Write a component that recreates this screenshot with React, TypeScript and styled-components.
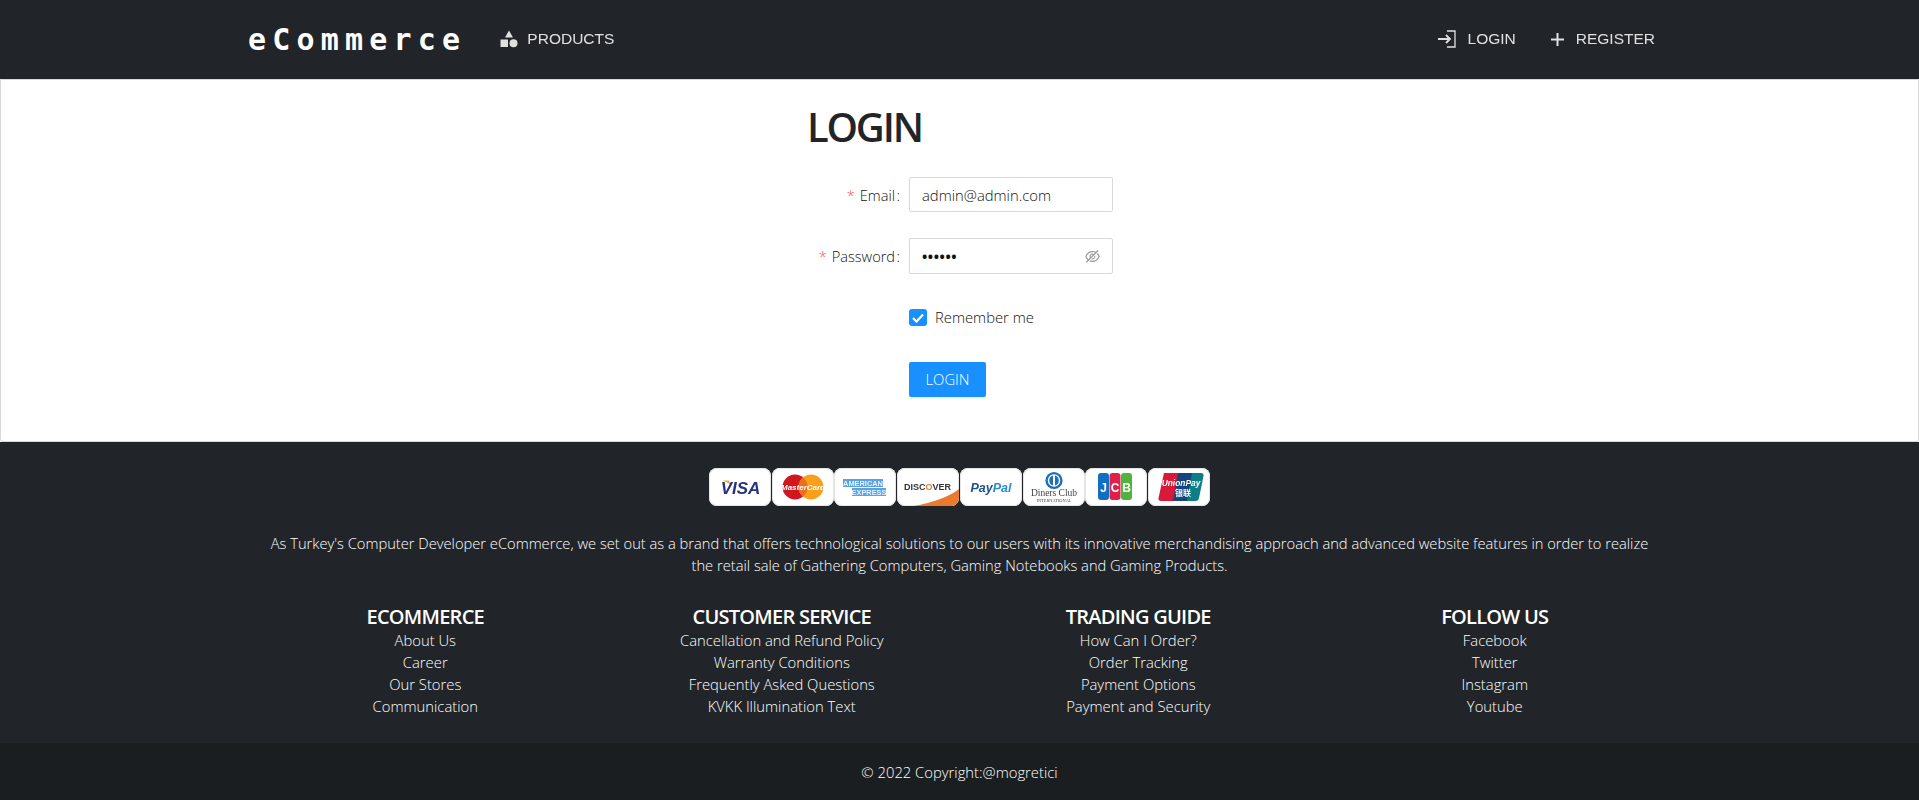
import React from "react";
import styled, { createGlobalStyle } from "styled-components";
import { AiOutlineEyeInvisible } from "react-icons/ai";

const GlobalStyle = createGlobalStyle`
  html, body {
    margin: 0;
    padding: 0;
    background: #ffffff;
    font-family: "Open Sans", "Noto Sans", sans-serif;
  }
  * {
    box-sizing: border-box;
  }
`;

const Navbar = styled.header`
  height: 79px;
  background: #212529;
  color: #ffffff;
  padding: 0 264px 1px 248px;
  display: flex;
  align-items: center;
`;

const Brand = styled.a`
  font-family: "DejaVu Sans Mono", "Liberation Mono", monospace;
  font-weight: 700;
  font-size: 30px;
  letter-spacing: 6.2px;
  margin-right: 34px;
  color: #ffffff;
`;

const NavLink = styled.a<{ $gap?: number }>`
  display: flex;
  align-items: center;
  gap: ${(p) => p.$gap ?? 9}px;
  font-family: "Liberation Sans", Arial, sans-serif;
  font-size: 15.5px;
  font-weight: 400;
  color: #ffffff;
  opacity: 0.86;
`;

const NavRight = styled.div`
  margin-left: auto;
  display: flex;
  gap: 34px;
`;

const Main = styled.main`
  height: 363px;
  border: 1px solid #d8d8d8;
  border-radius: 0 0 3px 3px;
  padding: 22px 0 0 2px;
  display: flex;
  justify-content: center;
`;

const LoginBox = styled.div`
  width: 305px;
`;

const Title = styled.h1`
  margin: 0 0 25px -1px;
  font-size: 40px;
  line-height: 50px;
  font-weight: 600;
  letter-spacing: -2.2px;
  color: #212529;
`;

const FormRow = styled.div<{ $mb: number }>`
  display: grid;
  grid-template-columns: 101px 204px;
  align-items: center;
  margin-bottom: ${(p) => p.$mb}px;
`;

const Label = styled.label`
  display: block;
  text-align: right;
  padding-right: 9px;
  font-size: 14.600px;
  font-weight: 300;
  color: #111111;
  white-space: nowrap;
`;

const Required = styled.span`
  color: #ff4d4f;
  margin-right: 5px;
`;

const InputBox = styled.div<{ $h: number }>`
  grid-column: 2;
  height: ${(p) => p.$h}px;
  border: 1px solid #d9d9d9;
  border-radius: 2px;
  padding: 0 12px;
  display: flex;
  align-items: center;
  justify-content: space-between;
  font-size: 14.800px;
  font-weight: 300;
  color: #111111;
`;

const Dots = styled.span`
  font-size: 14px;
  letter-spacing: 0.6px;
  font-weight: 700;
`;

const EyeIcon = styled(AiOutlineEyeInvisible)`
  width: 17px;
  height: 17px;
  color: #9a9a9a;
  margin-right: -1px;
`;

const CheckRow = styled.div`
  grid-column: 2;
  display: flex;
  align-items: center;
  gap: 8px;
  font-size: 14.800px;
  line-height: 17px;
  font-weight: 300;
  color: #111111;
`;

const CheckBox = styled.span`
  width: 18px;
  height: 17px;
  background: #1890ff;
  border-radius: 3px;
  display: flex;
  align-items: center;
  justify-content: center;
`;

const SubmitButton = styled.button`
  grid-column: 2;
  justify-self: start;
  width: 77px;
  height: 35px;
  padding: 0 0 2px;
  background: #1890ff;
  border: 0;
  border-radius: 2px;
  box-shadow: 0 2px 0 rgba(0, 0, 0, 0.045);
  color: #ffffff;
  font-family: inherit;
  font-size: 14.800px;
  font-weight: 300;
`;

const Footer = styled.footer`
  background: #212529;
  color: #ffffff;
  height: 301px;
  padding-top: 26px;
`;

const Cards = styled.div`
  display: flex;
  justify-content: center;
  gap: 0.75px;
`;

const PayCard = styled.div`
  width: 62px;
  height: 38px;
  background: #ffffff;
  border-radius: 8px;
  overflow: hidden;
  box-shadow: inset 0 0 0 1px #e4e4e4;
  svg {
    display: block;
    filter: blur(0.3px);
  }
`;

const About = styled.p`
  width: 1385px;
  margin: 26px auto 0;
  text-align: center;
  font-size: 14.700px;
  line-height: 22px;
  font-weight: 300;
`;

const Columns = styled.div`
  width: 1426px;
  margin: 28px 0 0 247px;
  display: grid;
  grid-template-columns: repeat(4, 1fr);
  text-align: center;
`;

const ColumnTitle = styled.h5`
  margin: 0;
  font-size: 20px;
  line-height: 25px;
  font-weight: 600;
  letter-spacing: -0.75px;
`;

const ColumnLink = styled.a`
  display: block;
  font-size: 14.800px;
  line-height: 22px;
  font-weight: 300;
`;

const Copyright = styled.div`
  height: 57px;
  background: #1b1e21;
  color: #ffffff;
  display: flex;
  align-items: center;
  justify-content: center;
  font-size: 14.800px;
  font-weight: 300;
`;

const sans = "Liberation Sans, Arial, sans-serif";

const Visa = () => (
  <svg width="62" height="38" viewBox="0 0 62 38">
    <path d="M13 12.500 L20 12.500 L22 18 Q20 14 13 12.500Z" fill="#f2a53a" />
    <text x="31.500" y="25.500" textAnchor="middle" fontFamily={sans} fontWeight="700" fontStyle="italic" fontSize="17" fill="#27337a">VISA</text>
  </svg>
);

const MasterCard = () => (
  <svg width="62" height="38" viewBox="0 0 62 38">
    <circle cx="23" cy="19" r="12.500" fill="#d0161f" />
    <circle cx="39" cy="19" r="12.500" fill="#f8a01c" />
    <path d="M31 9.300a12.500 12.500 0 0 1 0 19.400a12.500 12.500 0 0 1 0-19.400Z" fill="#e8701a" />
    <text x="31" y="22" textAnchor="middle" fontFamily={sans} fontWeight="700" fontStyle="italic" fontSize="8" fill="#ffffff">MasterCard</text>
  </svg>
);

const Amex = () => (
  <svg width="62" height="38" viewBox="0 0 62 38">
    <rect x="9" y="11" width="40" height="8" fill="#5ba3e0" />
    <rect x="18" y="20" width="34" height="8" fill="#5ba3e0" />
    <text x="29" y="18" textAnchor="middle" fontFamily={sans} fontSize="7.400" fontWeight="700" fill="#e6f2ff">AMERICAN</text>
    <text x="35" y="27" textAnchor="middle" fontFamily={sans} fontSize="7.400" fontWeight="700" fill="#e6f2ff">EXPRESS</text>
  </svg>
);

const Discover = () => (
  <svg width="62" height="38" viewBox="0 0 62 38">
    <path d="M17 38 Q48 32 62 21 V38Z" fill="#e87b2e" />
    <text x="30.500" y="21.500" textAnchor="middle" fontFamily={sans} fontSize="9" fontWeight="700" fill="#333333">
      DISC<tspan fill="#e87b2e">O</tspan>VER
    </text>
  </svg>
);

const PayPal = () => (
  <svg width="62" height="38" viewBox="0 0 62 38">
    <text x="31" y="23.500" textAnchor="middle" fontFamily={sans} fontSize="12.500" fontWeight="700" fontStyle="italic">
      <tspan fill="#1f4f8f">Pay</tspan>
      <tspan fill="#2a8fd0">Pal</tspan>
    </text>
  </svg>
);

const Diners = () => (
  <svg width="62" height="38" viewBox="0 0 62 38">
    <circle cx="31" cy="12.500" r="8.600" fill="#1c6fb8" />
    <circle cx="31" cy="12.500" r="6.200" fill="#ffffff" />
    <path d="M30 7.500v10a5.200 5.200 0 0 1 0-10Zm2 0a5.200 5.200 0 0 1 0 10Z" fill="#1c6fb8" />
    <text x="31" y="28" textAnchor="middle" fontFamily="Liberation Serif, serif" fontSize="9.500" fill="#444444">Diners Club</text>
    <text x="31" y="33.500" textAnchor="middle" fontFamily="Liberation Serif, serif" fontSize="4.400" fill="#444444">INTERNATIONAL</text>
  </svg>
);

const Jcb = () => (
  <svg width="62" height="38" viewBox="0 0 62 38">
    <rect x="13" y="5" width="11" height="27" rx="3" fill="#0f6fc0" />
    <rect x="24.500" y="5" width="11" height="27" rx="3" fill="#e01f4a" />
    <rect x="36" y="5" width="11" height="27" rx="3" fill="#4fb33c" />
    <text x="18.500" y="24" textAnchor="middle" fontFamily={sans} fontSize="12" fontWeight="700" fill="#ffffff">J</text>
    <text x="30" y="24" textAnchor="middle" fontFamily={sans} fontSize="12" fontWeight="700" fill="#ffffff">C</text>
    <text x="41.500" y="24" textAnchor="middle" fontFamily={sans} fontSize="12" fontWeight="700" fill="#ffffff">B</text>
  </svg>
);

const UnionPay = () => (
  <svg width="62" height="38" viewBox="0 0 62 38">
    <path d="M16 5h16l-5 28H13q-3 0-2.500-3Z" fill="#d7193a" />
    <path d="M30 5h16l-5 28H25Z" fill="#14457f" />
    <path d="M44 5h9q3 0 2.500 3L51 30q-.5 3-3.500 3H39Z" fill="#0f7d86" />
    <text x="33" y="18" textAnchor="middle" fontFamily={sans} fontSize="8.400" fontStyle="italic" fontWeight="700" fill="#ffffff">UnionPay</text>
    <text x="35" y="28" textAnchor="middle" fontFamily="Noto Sans CJK SC, sans-serif" fontSize="8" fontWeight="700" fill="#ffffff">银联</text>
  </svg>
);

const cardLogos = [Visa, MasterCard, Amex, Discover, PayPal, Diners, Jcb, UnionPay];

const columns = [
  { title: "ECOMMERCE", links: ["About Us", "Career", "Our Stores", "Communication"] },
  {
    title: "CUSTOMER SERVICE",
    links: ["Cancellation and Refund Policy", "Warranty Conditions", "Frequently Asked Questions", "KVKK Illumination Text"],
  },
  { title: "TRADING GUIDE", links: ["How Can I Order?", "Order Tracking", "Payment Options", "Payment and Security"] },
  { title: "FOLLOW US", links: ["Facebook", "Twitter", "Instagram", "Youtube"] },
];

const App: React.FC = () => {
  return (
    <>
      <GlobalStyle />
      <Navbar>
        <Brand>eCommerce</Brand>
        <NavLink>
          <svg width="18" height="18" viewBox="0 0 18 18" fill="#ffffff">
            <path d="M9 .5 13 7.500H5Z" />
            <rect x="0.500" y="9.500" width="7.500" height="7.500" />
            <circle cx="13.500" cy="13.200" r="4" />
          </svg>
          PRODUCTS
        </NavLink>
        <NavRight>
          <NavLink $gap={11}>
            <svg width="20" height="20" viewBox="0 0 20 20" fill="none" stroke="#ffffff" strokeWidth="1.800">
              <path d="M1 10h12M9 6l4 4-4 4" />
              <path d="M10 2h8v16h-8" strokeWidth="1.300" />
            </svg>
            LOGIN
          </NavLink>
          <NavLink $gap={11}>
            <svg width="15" height="15" viewBox="0 0 15 15" fill="none" stroke="#ffffff" strokeWidth="2">
              <path d="M7.500 1v13M1 7.500h13" />
            </svg>
            REGISTER
          </NavLink>
        </NavRight>
      </Navbar>
      <Main>
        <LoginBox>
          <Title>LOGIN</Title>
          <FormRow $mb={26}>
            <Label>
              <Required>*</Required>Email&#8202;:
            </Label>
            <InputBox $h={35}>admin@admin.com</InputBox>
          </FormRow>
          <FormRow $mb={35}>
            <Label>
              <Required>*</Required>Password&#8202;:
            </Label>
            <InputBox $h={36}>
              <Dots>••••••</Dots>
              <EyeIcon />
            </InputBox>
          </FormRow>
          <FormRow $mb={36}>
            <CheckRow>
              <CheckBox>
                <svg width="12" height="10" viewBox="0 0 12 10" fill="none" stroke="#ffffff" strokeWidth="2.200">
                  <path d="M1 5l3.500 3.500L11 1.500" />
                </svg>
              </CheckBox>
              Remember me
            </CheckRow>
          </FormRow>
          <FormRow $mb={0}>
            <SubmitButton>LOGIN</SubmitButton>
          </FormRow>
        </LoginBox>
      </Main>
      <Footer>
        <Cards>
          {cardLogos.map((Logo, i) => (
            <PayCard key={i}>
              <Logo />
            </PayCard>
          ))}
        </Cards>
        <About>
          As Turkey's Computer Developer eCommerce, we set out as a brand that offers technological solutions to our users with its innovative merchandising approach and advanced website features in order to realize the retail sale of Gathering Computers, Gaming Notebooks and Gaming Products.
        </About>
        <Columns>
          {columns.map((col) => (
            <div key={col.title}>
              <ColumnTitle>{col.title}</ColumnTitle>
              {col.links.map((link) => (
                <ColumnLink key={link}>{link}</ColumnLink>
              ))}
            </div>
          ))}
        </Columns>
      </Footer>
      <Copyright>© 2022 Copyright:@mogretici</Copyright>
    </>
  );
};

export default App;
